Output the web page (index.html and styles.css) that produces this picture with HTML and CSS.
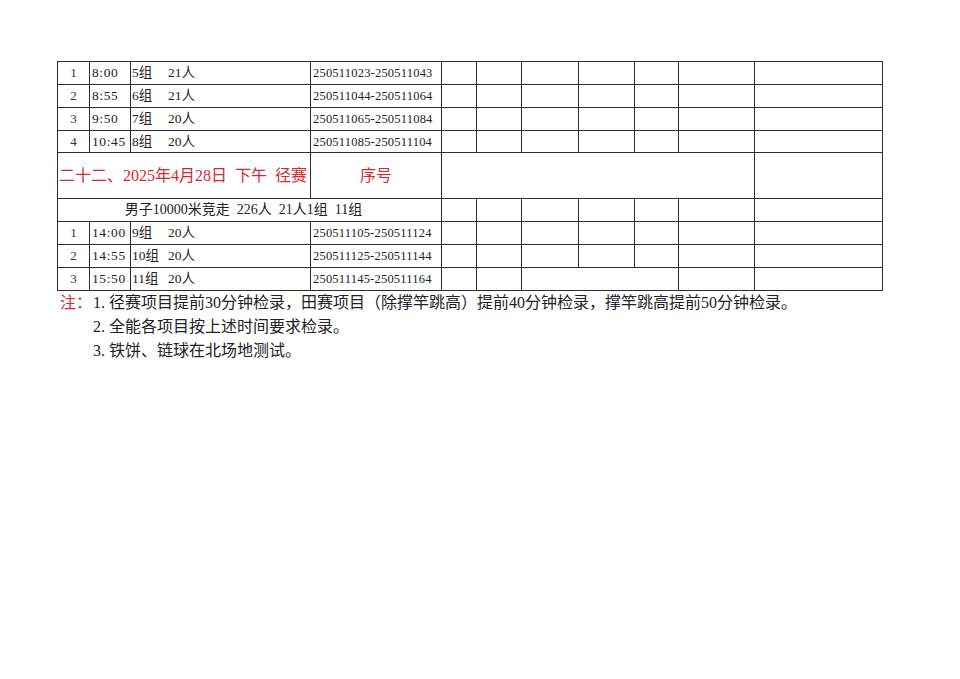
FILE: index.html
```html
<!DOCTYPE html>
<html lang="zh">
<head>
<meta charset="utf-8">
<link rel="stylesheet" href="styles.css">
</head>
<body>
<div class="page">
  <table class="sched">
    <colgroup>
      <col class="c1"><col class="c2"><col class="c3"><col class="c4">
      <col class="c5"><col class="c6"><col class="c7"><col class="c8">
      <col class="c9"><col class="c10"><col class="c11">
    </colgroup>
    <tbody>
      <tr class="row">
        <td class="num">1</td><td class="time">8:00</td>
        <td class="grp"><span class="g">5组</span>21人</td>
        <td class="ids">250511023-250511043</td>
        <td></td><td></td><td></td><td></td><td></td><td></td><td></td>
      </tr>
      <tr class="row">
        <td class="num">2</td><td class="time">8:55</td>
        <td class="grp"><span class="g">6组</span>21人</td>
        <td class="ids">250511044-250511064</td>
        <td></td><td></td><td></td><td></td><td></td><td></td><td></td>
      </tr>
      <tr class="row">
        <td class="num">3</td><td class="time">9:50</td>
        <td class="grp"><span class="g">7组</span>20人</td>
        <td class="ids">250511065-250511084</td>
        <td></td><td></td><td></td><td></td><td></td><td></td><td></td>
      </tr>
      <tr class="row short">
        <td class="num">4</td><td class="time">10:45</td>
        <td class="grp"><span class="g">8组</span>20人</td>
        <td class="ids">250511085-250511104</td>
        <td></td><td></td><td></td><td></td><td></td><td></td><td></td>
      </tr>
      <tr class="head">
        <td colspan="3" class="title">二十二、2025年4月28日&nbsp; 下午&nbsp; 径赛</td>
        <td class="seq">序号</td>
        <td colspan="6"></td>
        <td></td>
      </tr>
      <tr class="row">
        <td colspan="4" class="event">男子10000米竞走&nbsp; 226人&nbsp; 21人1组&nbsp; 11组</td>
        <td></td><td></td><td></td><td></td><td></td><td></td><td></td>
      </tr>
      <tr class="row">
        <td class="num">1</td><td class="time">14:00</td>
        <td class="grp"><span class="g">9组</span>20人</td>
        <td class="ids">250511105-250511124</td>
        <td></td><td></td><td></td><td></td><td></td><td></td><td></td>
      </tr>
      <tr class="row">
        <td class="num">2</td><td class="time">14:55</td>
        <td class="grp"><span class="g">10组</span>20人</td>
        <td class="ids">250511125-250511144</td>
        <td></td><td></td><td></td><td></td><td></td><td></td><td></td>
      </tr>
      <tr class="row">
        <td class="num">3</td><td class="time">15:50</td>
        <td class="grp"><span class="g">11组</span>20人</td>
        <td class="ids">250511145-250511164</td>
        <td></td><td></td><td colspan="3"></td><td></td><td></td>
      </tr>
    </tbody>
  </table>
  <div class="notes">
    <div class="label">注：</div>
    <div class="lines">
      <p>1. 径赛项目提前30分钟检录，田赛项目（除撑竿跳高）提前40分钟检录，撑竿跳高提前50分钟检录。</p>
      <p>2. 全能各项目按上述时间要求检录。</p>
      <p>3. 铁饼、链球在北场地测试。</p>
    </div>
  </div>
</div>
</body>
</html>
```
FILE: styles.css
```css
html, body {
  margin: 0;
  padding: 0;
  background: #ffffff;
}
body {
  font-family: "Liberation Serif", "Noto Sans CJK SC", serif;
  color: #222;
}
.page {
  padding: 61px 0 0 57px;
  width: 960px;
  height: 679px;
  box-sizing: border-box;
}
.sched {
  border-collapse: collapse;
  table-layout: fixed;
  width: 826px;
}
.sched td {
  border: 1px solid #2e2e2e;
  padding: 0;
  font-size: 13px;
  line-height: 16px;
  white-space: nowrap;
  overflow: hidden;
}
.c1 { width: 32px; }
.c2 { width: 41px; }
.c3 { width: 180px; }
.c4 { width: 131px; }
.c5 { width: 35px; }
.c6 { width: 45px; }
.c7 { width: 57px; }
.c8 { width: 56px; }
.c9 { width: 44px; }
.c10 { width: 76px; }
.c11 { width: 128px; }
.row { height: 23px; }
.short { height: 22px; }
.head { height: 46px; }
.num { text-align: center; color: #333; }
.time { padding-left: 2px !important; font-size: 13.5px !important; letter-spacing: 0.6px; }
.grp { padding-left: 1px !important; font-size: 13.5px !important; }
.g { display: inline-block; width: 36px; }
.ids { padding-left: 2px !important; font-size: 12.5px !important; letter-spacing: 0.2px; }
.title {
  color: #d22a34;
  font-size: 16px !important;
  padding-left: 1px !important;
}
.seq {
  color: #d22a34;
  font-size: 16px !important;
  text-align: center;
}
.event {
  text-align: center;
  font-size: 14px !important;
  padding-right: 12px !important;
}
.notes {
  display: flex;
  margin-left: 3px;
  font-size: 16px;
  line-height: 24px;
}
.label {
  color: #d22a34;
  width: 33px;
  flex: none;
}
.lines p {
  margin: 0;
  white-space: nowrap;
}
```
